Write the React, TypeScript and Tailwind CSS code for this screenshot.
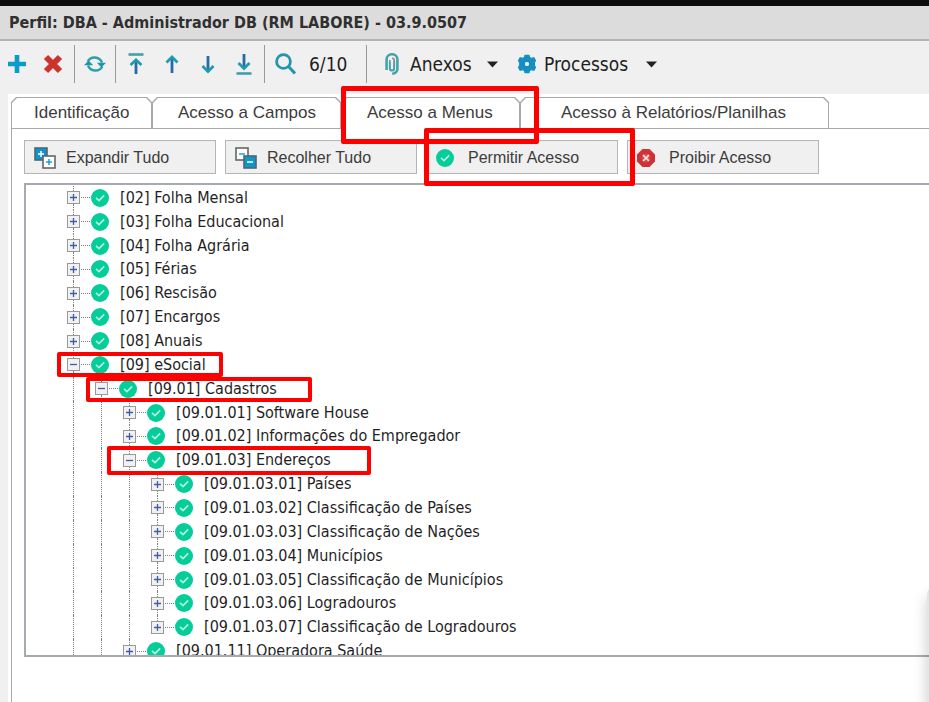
import { useState } from 'react';
import type { ReactNode } from 'react';

type TreeItem = {
  code: string;
  label: string;
  level: number;
  open?: boolean;
  last?: boolean;
  mark?: string;
};

const TREE: TreeItem[] = [
  { code: '02', label: 'Folha Mensal', level: 0 },
  { code: '03', label: 'Folha Educacional', level: 0 },
  { code: '04', label: 'Folha Agrária', level: 0 },
  { code: '05', label: 'Férias', level: 0 },
  { code: '06', label: 'Rescisão', level: 0 },
  { code: '07', label: 'Encargos', level: 0 },
  { code: '08', label: 'Anuais', level: 0 },
  { code: '09', label: 'eSocial', level: 0, open: true, mark: '-left-[10px] w-[166px] -top-px h-[25px]' },
  { code: '09.01', label: 'Cadastros', level: 1, open: true, mark: 'left-[19px] w-[226px] top-0 h-[25px]' },
  { code: '09.01.01', label: 'Software House', level: 2 },
  { code: '09.01.02', label: 'Informações do Empregador', level: 2 },
  { code: '09.01.03', label: 'Endereços', level: 2, open: true, mark: 'left-[40px] w-[264px] -top-[2px] h-[29px]' },
  { code: '09.01.03.01', label: 'Países', level: 3 },
  { code: '09.01.03.02', label: 'Classificação de Países', level: 3 },
  { code: '09.01.03.03', label: 'Classificação de Nações', level: 3 },
  { code: '09.01.03.04', label: 'Municípios', level: 3 },
  { code: '09.01.03.05', label: 'Classificação de Municípios', level: 3 },
  { code: '09.01.03.06', label: 'Logradouros', level: 3 },
  { code: '09.01.03.07', label: 'Classificação de Logradouros', level: 3, last: true },
  { code: '09.01.11', label: 'Operadora Saúde', level: 2 },
];

const TABS = [
  { label: 'Identificação', width: 'w-[141px]', pad: 'pl-[22px]' },
  { label: 'Acesso a Campos', width: 'w-[189px]', pad: 'pl-[25px]' },
  { label: 'Acesso a Menus', width: 'w-[179px]', pad: 'pl-[25px]', mark: true },
  { label: 'Acesso à Relatórios/Planilhas', width: 'w-[309px]', pad: 'pl-[40px]' },
];

function CheckIcon() {
  return (
    <svg width="18" height="18" viewBox="0 0 18 18" className="shrink-0" aria-hidden="true">
      <circle cx="9" cy="9" r="9" fill="#05cd99" />
      <path d="M5 8.8 8 11.6 13.2 6.4" fill="none" stroke="#b9f3e0" strokeWidth="1.6" />
    </svg>
  );
}

function DenyIcon() {
  return (
    <svg width="18" height="18" viewBox="0 0 18 18" className="shrink-0" aria-hidden="true">
      <path d="M5.8 0.8h6.4l5 5v6.4l-5 5H5.800l-5-5V5.800z" fill="#cf3338" stroke="#cf3338" strokeWidth="1.6" strokeLinejoin="round" />
      <circle cx="9" cy="9" r="4.2" fill="#d65355" />
      <path d="m6 6 6 6M12 6l-6 6" stroke="#f8e4e4" strokeWidth="1.7" />
    </svg>
  );
}

function ExpandIcon() {
  return (
    <svg width="22" height="22" viewBox="0 0 22 22" className="shrink-0" aria-hidden="true">
      <rect x="1" y="1" width="12" height="12" fill="#0a98cc" stroke="#55656d" strokeWidth="1.6" />
      <path d="M7 4v6M4 7h6" stroke="#fff" strokeWidth="1.5" />
      <rect x="9" y="9" width="12" height="12" fill="#fff" stroke="#666" strokeWidth="1.6" />
      <path d="M15 12v6M12 15h6" stroke="#16a2d2" strokeWidth="1.5" />
    </svg>
  );
}

function CollapseIcon() {
  return (
    <svg width="22" height="22" viewBox="0 0 22 22" className="shrink-0" aria-hidden="true">
      <rect x="1" y="1" width="12" height="12" fill="#fff" stroke="#666" strokeWidth="1.6" />
      <path d="M4 7h6" stroke="#16a2d2" strokeWidth="1.5" />
      <rect x="9" y="9" width="12" height="12" fill="#0a98cc" stroke="#55656d" strokeWidth="1.6" />
      <path d="M12 15h6" stroke="#fff" strokeWidth="1.5" />
    </svg>
  );
}

function Caret() {
  return (
    <svg width="11" height="7" viewBox="0 0 11 7" aria-hidden="true">
      <path d="M0 0.5h11L5.5 6.5z" fill="#222" />
    </svg>
  );
}

function ToolIcon({ label, width, children }: { label: string; width: string; children: ReactNode }) {
  return (
    <button type="button" aria-label={label} className={`flex h-full items-center justify-center ${width}`}>
      <svg width="22" height="22" viewBox="0 0 22 22" fill="none" aria-hidden="true">
        {children}
      </svg>
    </button>
  );
}

function Separator() {
  return <div className="mx-0.5 h-[38px] w-px bg-[#999]" />;
}

function Toolbar() {
  return (
    <div className="bg-[#f0f0f0] pb-[7px]">
      <div className="flex h-[46px] items-center text-[19px] text-[#1f1f1f]">
        <ToolIcon label="Incluir" width="w-[34px]">
          <path d="M11 2v18M2 11h18" stroke="#0b9bcb" strokeWidth="4.6" />
        </ToolIcon>
        <ToolIcon label="Excluir" width="w-[38px]">
          <path d="m4 4 14 14M18 4 4 18" stroke="#cc332e" strokeWidth="6" />
        </ToolIcon>
        <Separator />
        <ToolIcon label="Atualizar" width="w-9">
          <path d="M3.6 8.500A8 8 0 0 1 18 9.500" stroke="#2b9fae" strokeWidth="2.4" />
          <path d="M18.4 13.500A8 8 0 0 1 4 12.500" stroke="#2b9fae" strokeWidth="2.4" />
          <path d="M12.8 9.8H22L17.4 14.500zM0 12.2h9.2L4.6 7.500z" fill="#2196a6" />
        </ToolIcon>
        <Separator />
        <ToolIcon label="Primeiro" width="w-9">
          <path d="M3.5 1.5h15" stroke="#449da9" strokeWidth="2.6" />
          <path d="M11 7.5V21" stroke="#2a69a6" strokeWidth="2.8" />
          <path d="m5.5 12 5.5-5 5.5 5" stroke="#1f9bb0" strokeWidth="2.8" />
        </ToolIcon>
        <ToolIcon label="Anterior" width="w-9">
          <path d="M11 4v16" stroke="#2a69a6" strokeWidth="2.8" />
          <path d="m5.5 9.5 5.5-5.5 5.5 5.5" stroke="#1f9bb0" strokeWidth="2.8" />
        </ToolIcon>
        <ToolIcon label="Próximo" width="w-9">
          <path d="M11 3v16" stroke="#2a69a6" strokeWidth="2.8" />
          <path d="m5.5 13 5.5 5.5 5.5-5.5" stroke="#1f9bb0" strokeWidth="2.8" />
        </ToolIcon>
        <ToolIcon label="Último" width="w-9">
          <path d="M3.5 20.5h15" stroke="#449da9" strokeWidth="2.6" />
          <path d="M11 1v14" stroke="#2a69a6" strokeWidth="2.8" />
          <path d="m5.5 10 5.5 5.5 5.5-5.5" stroke="#1f9bb0" strokeWidth="2.8" />
        </ToolIcon>
        <Separator />
        <ToolIcon label="Localizar" width="w-9">
          <circle cx="9.5" cy="8.5" r="6.9" stroke="#2595ad" strokeWidth="2.8" />
          <path d="m14.5 13.5 6.5 7" stroke="#2595ad" strokeWidth="3" />
        </ToolIcon>
        <span className="w-[61px] pl-[6px]">6/10</span>
        <Separator />
        <button type="button" className="flex h-full items-center pl-3">
          <svg width="22" height="22" viewBox="0 0 22 22" fill="none" aria-hidden="true">
            <path
              d="M8.8 7v8a2.200 2.200 0 0 0 4.400 0V7.500a2.200 2.200 0 0 0-2.200-2.200"
              stroke="#808a90"
              strokeWidth="1.6"
            />
            <path
              d="M5.600 17V6.600a5.400 5.400 0 0 1 10.800 0v9a4.600 4.600 0 0 1-5.200 4.900"
              stroke="#46a3ad"
              strokeWidth="2.6"
            />
            <path d="M8.800 9v6.500a2.200 2.200 0 0 0 4.400 0V8" stroke="#46a3ad" strokeWidth="1.800" />
          </svg>
          <span className="w-[84px] pl-[7px] text-left">Anexos</span>
          <Caret />
        </button>
        <button type="button" className="flex h-full items-center pl-[19px]">
          <svg width="20" height="20" viewBox="0 0 20 20" aria-hidden="true">
            <path
              d="M7.500 .8h5l.5 2.200 1.400.8L17.200 3l2 3.800-1.200 1.600v3.200l1.200 1.600-2 3.800-2.800-.8-1.400.8-.5 2.200h-5L7 17l-1.400-.8-2.800.8-2-3.800L2 11.600V8.400L.8 6.800l2-3.800 2.800.8L7 3z"
              fill="#148fc1"
            />
            <circle cx="10" cy="10" r="2.800" fill="#d9edf3" stroke="#0f7fae" />
          </svg>
          <span className="w-[109px] pl-[7px] text-left">Processos</span>
          <Caret />
        </button>
      </div>
    </div>
  );
}

function ActionButton({ icon, label, mark }: { icon: ReactNode; label: string; mark?: boolean }) {
  return (
    <div className="relative">
      <button
        type="button"
        className="flex h-[34px] w-[192px] items-center border border-[#b5b5b5] bg-[#f0f0f0] pt-px pl-[9px] font-['Liberation_Sans',sans-serif] text-[16px] text-[#3c3c3c]"
      >
        <span className="flex w-8 justify-start">{icon}</span>
        {label}
      </button>
      {mark && <div className="pointer-events-none absolute -top-3 -left-[2px] z-10 h-[58px] w-[211px] rounded-xs border-5 border-[#fe0000]" />}
    </div>
  );
}

function TreeRow({ item }: { item: TreeItem }) {
  return (
    <li role="treeitem" aria-expanded={!!item.open} aria-level={item.level + 1} className="relative flex items-center">
      {/* Guides of the parent levels */}
      {Array.from({ length: item.level }, (_, i) => (
        <span key={i} className="flex w-7 shrink-0 self-stretch pl-[6px]">
          <span className="border-l border-dotted border-[#808080]" />
        </span>
      ))}

      {/* Toggle */}
      <span className="flex w-[13px] shrink-0 flex-col items-center self-stretch">
        <span className="flex-1 border-l border-dotted border-[#808080]" />
        <button
          type="button"
          aria-label={`${item.open ? 'Recolher' : 'Expandir'} ${item.label}`}
          className="flex size-[13px] items-center justify-center border border-[#999] bg-[#f1f1f1]"
        >
          <svg width="9" height="9" viewBox="0 0 9 9" aria-hidden="true">
            <path d={item.open ? 'M1 4.5h7' : 'M1 4.5h7M4.5 1v7'} stroke="#3f5ba5" strokeWidth="1.3" />
          </svg>
        </button>
        <span className={`flex-1 ${item.last ? '' : 'border-l border-dotted border-[#808080]'}`} />
      </span>

      <span className="mx-px w-[9px] shrink-0 border-t border-dotted border-[#808080]" />
      <CheckIcon />
      <span className="pl-[11px] whitespace-nowrap">
        [{item.code}] {item.label}
      </span>
      {item.mark && <div className={`pointer-events-none absolute z-10 rounded-xs border-4 border-[#fe0000] ${item.mark}`} />}
    </li>
  );
}

export default function App() {
  const [activeTab, setActiveTab] = useState('Acesso a Menus');

  return (
    <div className="relative flex min-h-screen flex-col overflow-hidden bg-[#f0f0f0] font-['DejaVu_Sans_Condensed','DejaVu_Sans',sans-serif]">
      <div className="h-[6px] bg-[#0c0c0c]" />
      <header className="flex h-[35px] items-center border-b-2 border-[#b4b4b4] bg-[#dcdcdc] pl-[9px]">
        <h1 className="text-[16px] font-bold whitespace-nowrap text-[#303030]">
          Perfil: DBA - Administrador DB (RM LABORE) - 03.9.0507
        </h1>
      </header>
      <Toolbar />

      <main className="ml-2 flex flex-1 flex-col bg-white pt-[3px] pl-[3px]">
        {/* Tabs */}
        <div role="tablist" className="flex font-['Liberation_Sans',sans-serif] text-[17px] text-[#3c3c3c]">
          {TABS.map((tab) => (
            <div key={tab.label} className={`relative ${tab.width}`}>
              <button
                type="button"
                role="tab"
                aria-selected={activeTab === tab.label}
                onClick={() => setActiveTab(tab.label)}
                className={`flex h-8 w-full bg-[#a9a9a9] px-px pt-px [clip-path:polygon(0_5px,5px_0,calc(100%-5px)_0,100%_5px,100%_100%,0_100%)] ${
                  activeTab === tab.label ? '' : 'pb-px'
                }`}
              >
                <span
                  className={`flex flex-1 items-center self-stretch bg-white [clip-path:polygon(0_5px,5px_0,calc(100%-5px)_0,100%_5px,100%_100%,0_100%)] ${tab.pad} ${
                    activeTab === tab.label ? 'pb-px' : ''
                  }`}
                >
                  {tab.label}
                </span>
              </button>
              {tab.mark && (
                <div className="pointer-events-none absolute -top-[11px] left-0 z-10 h-[58px] w-[198px] rounded-xs border-5 border-[#fe0000]" />
              )}
            </div>
          ))}
          <div className="flex-1 border-b border-[#a9a9a9]" />
        </div>

        {/* Tab panel */}
        <section role="tabpanel" aria-label={activeTab} className="flex-1 border-l border-[#a9a9a9] pt-[11px] pl-3">
          <div className="flex gap-[9px]">
            <ActionButton icon={<ExpandIcon />} label="Expandir Tudo" />
            <ActionButton icon={<CollapseIcon />} label="Recolher Tudo" />
            <ActionButton icon={<CheckIcon />} label="Permitir Acesso" mark />
            <ActionButton icon={<DenyIcon />} label="Proibir Acesso" />
          </div>

          <div className="mt-[9px] h-[474px] overflow-hidden border-y-2 border-l-2 border-[#a5abb0] pt-px pl-[41px]">
            <ul role="tree" className="grid h-[477px] auto-rows-fr text-[16px] text-[#1f1f1f]">
              {TREE.map((item) => (
                <TreeRow key={item.code} item={item} />
              ))}
            </ul>
          </div>
        </section>
      </main>

      {/* Edge of the side panel */}
      <div className="absolute top-[588px] -right-[18px] bottom-0 w-5 rounded-tl-md bg-black/10 shadow-[0_8px_14px_rgba(0,0,0,0.2)]" />
    </div>
  );
}
